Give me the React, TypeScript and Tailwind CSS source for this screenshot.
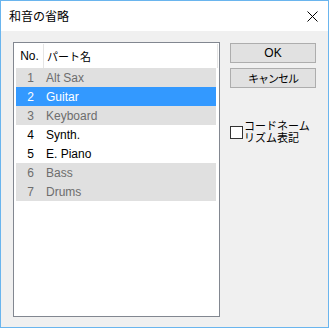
import React from "react";

const rows = [
  { n: "1", name: "Alt Sax", kind: "dis" },
  { n: "2", name: "Guitar", kind: "sel" },
  { n: "3", name: "Keyboard", kind: "dis" },
  { n: "4", name: "Synth.", kind: "norm" },
  { n: "5", name: "E. Piano", kind: "norm" },
  { n: "6", name: "Bass", kind: "dis" },
  { n: "7", name: "Drums", kind: "dis" },
];

const latin = { fontFamily: '"Liberation Sans", "Noto Sans CJK JP", sans-serif' };
const jp = { fontFamily: '"Noto Sans CJK JP", sans-serif' };

export default function App() {
  return (
    <div className="w-[329px] h-[328px] border border-[#6ab5ee] flex flex-col bg-[#f0f0f0] overflow-hidden">
      <div className="h-[30px] bg-white flex items-center justify-between shrink-0">
        <span className="pl-[8px] text-[12px] text-black leading-none" style={jp}>和音の省略</span>
        <svg width="11" height="11" viewBox="0 0 11 11" className="mr-[10px]">
          <path d="M0.5 0.5 L10.5 10.5 M10.5 0.5 L0.5 10.5" stroke="#000" strokeWidth="1" />
        </svg>
      </div>
      <div className="flex flex-1 pl-[12px] pt-[11px]">
        <div className="w-[207px] h-[275px] border border-[#828790] bg-white p-px flex flex-col">
          <div className="h-[24px] flex items-stretch text-[12px] text-black" style={latin}>
            <div className="w-[29px] flex items-center justify-center border-r border-[#e5e5e5] pl-px">No.</div>
            <div className="flex-1 flex items-center pl-[3px] border-r border-[#e5e5e5]" style={jp}>
              <span className="text-[11px]">パート名</span>
            </div>
          </div>
          {rows.map((r) => {
            const cls =
              r.kind === "sel"
                ? "bg-[#3399ff] text-white"
                : r.kind === "dis"
                ? "bg-[#e0e0e0] text-[#6d6d6d]"
                : "bg-white text-black";
            return (
              <div key={r.n} className={`h-[19px] mx-px mr-[2px] flex items-center text-[12px] ${cls}`} style={latin}>
                <div className="w-[18px] text-right">{r.n}</div>
                <div className="pl-[12px]">{r.name}</div>
              </div>
            );
          })}
        </div>
        <div className="ml-[10px] pt-px flex flex-col">
          <button className="w-[86px] h-[20px] border border-[#adadad] bg-[#e1e1e1] text-[12px] text-black flex items-center justify-center leading-none" style={latin}>
            OK
          </button>
          <button className="mt-[5px] w-[86px] h-[20px] border border-[#adadad] bg-[#e1e1e1] text-[11px] text-black flex items-center justify-center leading-none tracking-[-1px]" style={jp}>
            キャンセル
          </button>
          <div className="mt-[31px] flex items-center">
            <div className="w-[13px] h-[13px] border border-[#333333] bg-white shrink-0 mt-[2px]" />
            <div className="ml-px text-[11px] leading-[12px] text-black" style={jp}>
              <div className="h-[12px]">コードネーム</div>
              <div className="h-[12px]">リズム表記</div>
            </div>
          </div>
        </div>
      </div>
    </div>
  );
}
